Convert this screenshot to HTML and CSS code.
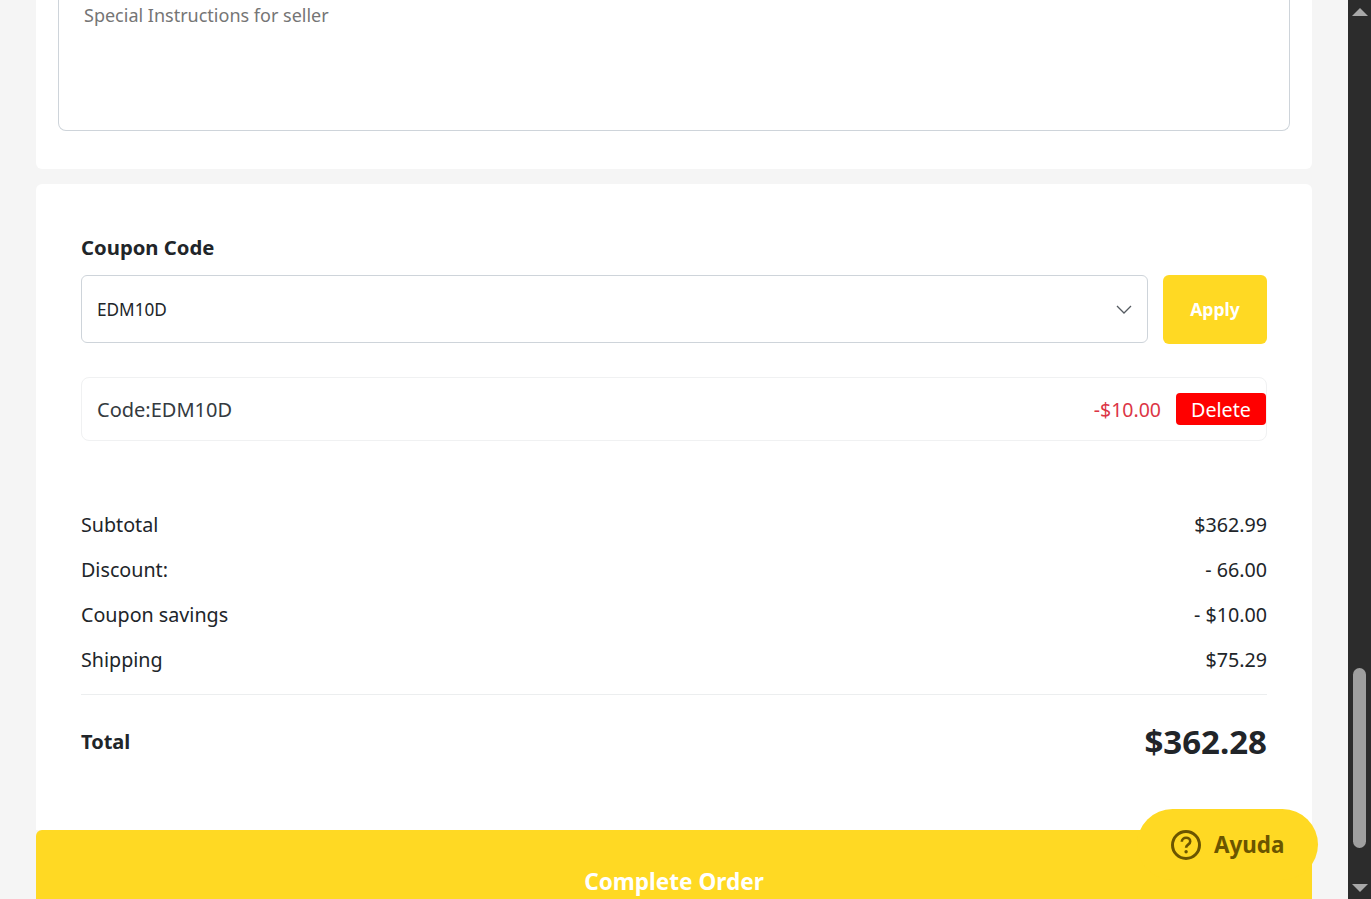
FILE: index.html
```html
<!DOCTYPE html>
<html lang="en">

<head>
    <meta charset="utf-8">
    <title>Checkout</title>
    <link rel="stylesheet" href="styles.css">
</head>

<body>
    <div class="viewport">
        <main class="page">
            <!--note to seller, scrolled partly out of view-->
            <section class="card note-card">
                <div class="note-box">Special Instructions for seller</div>
            </section>

            <section class="card order-card">
                <h2 class="coupon-title">Coupon Code</h2>
                <div class="coupon-row">
                    <div class="coupon-select">
                        <span>EDM10D</span>
                        <svg class="chevron" width="16" height="9" viewBox="0 0 16 9" fill="none">
                            <path d="M1 1l7 7 7-7" stroke="#555b61" stroke-width="1.3" />
                        </svg>
                    </div>
                    <button class="apply">Apply</button>
                </div>

                <div class="applied">
                    <span class="applied-code">Code:EDM10D</span>
                    <span class="applied-amount">-$10.00</span>
                    <button class="delete">Delete</button>
                </div>

                <div class="summary">
                    <div class="summary-row"><span>Subtotal</span><span>$362.99</span></div>
                    <div class="summary-row"><span>Discount:</span><span>- 66.00</span></div>
                    <div class="summary-row"><span>Coupon savings</span><span>- $10.00</span></div>
                    <div class="summary-row"><span>Shipping</span><span>$75.29</span></div>
                </div>

                <div class="total">
                    <span class="total-label">Total</span>
                    <span class="total-price">$362.28</span>
                </div>
            </section>

            <button class="complete">Complete Order</button>
        </main>

        <!--help button floats over the page-->
        <div class="help">
            <svg width="30" height="30" viewBox="0 0 30 30" fill="none">
                <circle cx="15" cy="15" r="13.5" stroke="#6b5500" stroke-width="3" />
                <path d="M10.8 11.8c0-2.5 1.9-4 4.3-4 2.400 0 4.100 1.500 4.100 3.600 0 3.300-4.100 3.200-4.100 6.300" stroke="#6b5500" stroke-width="2.600" />
                <circle cx="15.100" cy="21.700" r="1.700" fill="#6b5500" />
            </svg>
            <span>Ayuda</span>
        </div>

        <!--browser scrollbar-->
        <div class="scrollbar">
            <div class="arrow-up"></div>
            <div class="thumb"></div>
            <div class="arrow-down"></div>
        </div>
    </div>
</body>

</html>
```

FILE: styles.css
```css
html,
body {
    margin: 0;
    height: 100%;
    overflow: hidden;
}

body {
    font-family: "Noto Sans", "Open Sans", sans-serif;
    color: #212529;
    background-color: #f5f5f5;
}

.viewport {
    position: relative;
    display: flex;
    height: 899px;
    overflow: hidden;
}

.page {
    flex: 1;
    margin-top: -100px;
    padding: 0 36px;
}

.card {
    background-color: #fff;
    border-radius: 6px;
}

/*note card*/

.note-card {
    padding: 0 22px 38px;
    margin-bottom: 15px;
    border-radius: 0 0 6px 6px;
}

.note-box {
    box-sizing: border-box;
    height: 231px;
    padding: 102px 25px 0;
    border: 1px solid #ced4da;
    border-top: 0;
    border-radius: 0 0 8px 8px;
    font-size: 18px;
    line-height: 26px;
    color: #757575;
}

/*coupon*/

.order-card {
    padding: 49px 45px 42px;
    border-radius: 6px 6px 0 0;
}

.coupon-title {
    margin: 0 0 14px;
    font-size: 20.3px;
    line-height: 28px;
    font-weight: 700;
}

.coupon-row {
    display: flex;
    gap: 15px;
}

.coupon-select {
    flex: 1;
    box-sizing: border-box;
    height: 68px;
    display: flex;
    align-items: center;
    justify-content: space-between;
    padding: 0 15px;
    border: 1px solid #ced4da;
    border-radius: 6px;
    font-size: 17.2px;
    color: #212529;
}

.apply {
    width: 104px;
    height: 69px;
    padding: 0 0 2px;
    border: 0;
    border-radius: 6px;
    background-color: #ffd923;
    color: #fff;
    font-family: inherit;
    font-size: 17.6px;
    font-weight: 700;
}

.applied {
    box-sizing: border-box;
    height: 64px;
    margin-top: 33px;
    display: flex;
    align-items: center;
    padding: 0 0 0 15px;
    border: 1px solid #f0f1f2;
    border-radius: 8px;
    font-size: 20px;
    color: #343a40;
}

.applied-code {
    flex: 1;
}

.applied-amount {
    font-size: 19.5px;
    color: #dc3545;
}

.delete {
    width: 90px;
    height: 32px;
    margin-left: 15px;
    padding: 2px 0 0;
    border: 0;
    border-radius: 4px;
    background-color: #f00;
    color: #fff;
    font-family: inherit;
    font-size: 19.7px;
    line-height: 30px;
}

/*totals*/

.summary {
    margin-top: 61px;
    padding-bottom: 12px;
    border-bottom: 1px solid #eceeef;
}

.summary-row {
    display: flex;
    justify-content: space-between;
    height: 45px;
    font-size: 19.7px;
    line-height: 45px;
}

.total {
    display: flex;
    justify-content: space-between;
    align-items: center;
    height: 93px;
}

.total-label {
    font-size: 20px;
    font-weight: 700;
}

.total-price {
    font-size: 33px;
    font-weight: 700;
}

.complete {
    display: block;
    width: 100%;
    height: 106px;
    padding: 0 0 3px;
    border: 0;
    border-radius: 6px 6px 0 0;
    background-color: #ffd923;
    color: #fff;
    font-family: inherit;
    font-size: 22.6px;
    font-weight: 700;
}

/*help button*/

.help {
    position: absolute;
    left: 1137px;
    top: 809px;
    box-sizing: border-box;
    width: 181px;
    height: 71px;
    display: flex;
    align-items: center;
    gap: 13px;
    padding-left: 34px;
    border-radius: 36px;
    background-color: #ffd923;
    color: #6b5500;
    font-size: 22.4px;
    font-weight: 700;
}

/*scrollbar*/

.scrollbar {
    position: relative;
    width: 23px;
    background-color: #2c2c2c;
}

.thumb {
    position: absolute;
    left: 5px;
    top: 668px;
    width: 13px;
    height: 180px;
    border-radius: 7px;
    background-color: #9f9f9f;
}

.arrow-up,
.arrow-down {
    position: absolute;
    left: 4px;
    width: 0;
    height: 0;
    border-left: 8px solid transparent;
    border-right: 8px solid transparent;
}

.arrow-up {
    top: 8px;
    border-bottom: 8px solid #a8a8a8;
}

.arrow-down {
    bottom: 7px;
    border-top: 8px solid #a8a8a8;
}
```
